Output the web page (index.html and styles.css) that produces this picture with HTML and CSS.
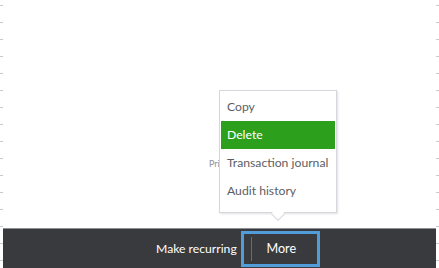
FILE: index.html
```html
<!DOCTYPE html>
<html lang="en">
<head>
    <meta charset="UTF-8">
    <title>More actions</title>
    <link rel="stylesheet" href="styles.css">
</head>
<body>
    <div class="page">
        <div class="gutter"></div>
        <div class="main">
            <div class="content">
                <span class="hint">Pri</span>
            </div>
            <div class="action-bar">
                <button class="bar-btn">Make recurring</button>
                <button class="bar-btn more">More</button>
            </div>
        </div>
        <div class="gutter"></div>

        <!-- popup menu for the More button -->
        <div class="menu">
            <div class="menu-item">Copy</div>
            <div class="menu-item selected">Delete</div>
            <div class="menu-item">Transaction journal</div>
            <div class="menu-item">Audit history</div>
        </div>
    </div>
</body>
</html>
```

FILE: styles.css
```css
body {
    margin: 0;
    font-family: Lato, 'Open Sans', Arial, sans-serif;
    background: #ffffff;
}

.page {
    position: relative;
    display: flex;
    width: 439px;
    height: 268px;
    overflow: hidden;
}

.gutter {
    width: 3px;
    flex-shrink: 0;
    background: repeating-linear-gradient(to bottom,
        transparent 0, transparent 5px,
        #c9cacc 5px, #c9cacc 6px,
        transparent 6px, transparent 17px);
}

.main {
    flex: 1;
    display: flex;
    flex-direction: column;
}

.content {
    flex: 1;
    padding: 151px 0 0 206px;
    box-sizing: border-box;
}

.hint {
    font-size: 9px;
    color: #8d9096;
}

.action-bar {
    height: 40px;
    box-sizing: border-box;
    background: #393a3d;
    border-top: 1px solid #8d9096;
    display: flex;
    align-items: center;
    gap: 4px;
    padding-left: 153px;
}

.bar-btn {
    font-family: inherit;
    font-size: 12.2px;
    color: #ffffff;
    background: none;
    border: none;
    padding: 0;
    height: 36px;
    cursor: pointer;
}

.bar-btn.more {
    position: relative;
    width: 79px;
    padding: 0 0 0 2px;
    border: 3px solid #519dd9;
    box-sizing: border-box;
    font-size: 12.6px;
}

.bar-btn.more::before {
    content: '';
    position: absolute;
    left: 7px;
    top: 3px;
    bottom: 3px;
    width: 1px;
    background: #6b6c72;
}

.menu {
    position: absolute;
    left: 219px;
    top: 90px;
    width: 118px;
    box-sizing: border-box;
    padding: 2px 1px 7px;
    background: #ffffff;
    border: 1px solid #d4d7dc;
    box-shadow: 1px 1px 2px rgba(0, 0, 0, 0.12);
}

.menu::after {
    content: '';
    position: absolute;
    left: 53px;
    bottom: -7px;
    width: 9px;
    height: 9px;
    background: #ffffff;
    border-right: 1px solid #d4d7dc;
    border-bottom: 1px solid #d4d7dc;
    transform: rotate(45deg);
}

.menu-item {
    height: 28px;
    line-height: 28px;
    padding-left: 6px;
    font-size: 12.2px;
    color: #5d5e63;
    white-space: nowrap;
}

.menu-item.selected {
    background: #2ca01c;
    color: #ffffff;
}
```
